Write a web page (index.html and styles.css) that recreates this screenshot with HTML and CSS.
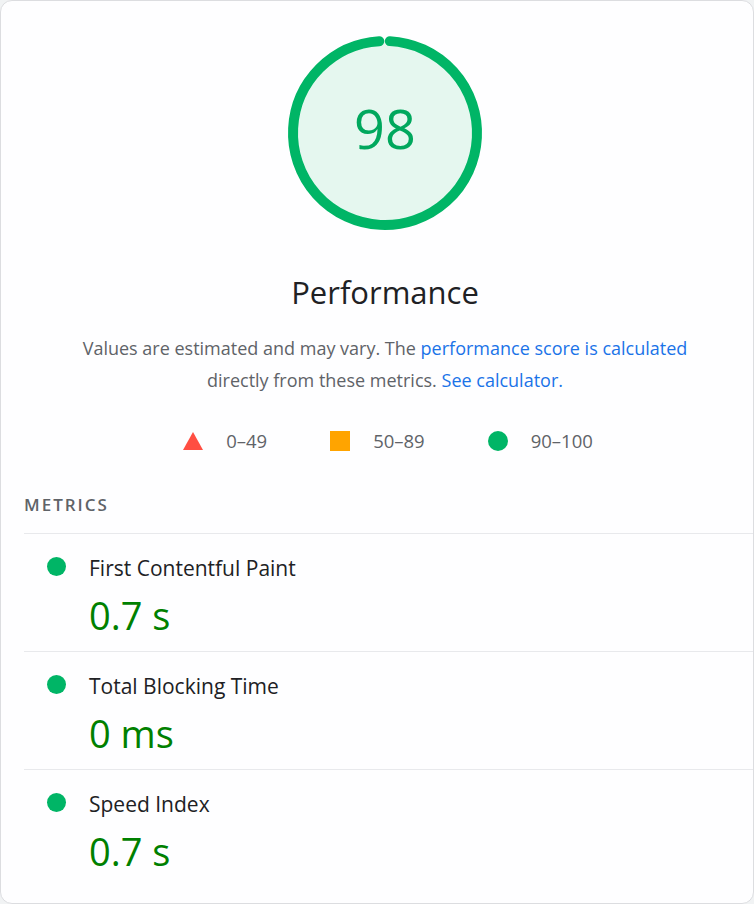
FILE: index.html
```html
<!DOCTYPE html>
<html>
<head>
	<meta charset="utf-8">
	<title>Performance</title>
	<link rel="stylesheet" href="styles.css">
</head>
<body>
	<div class="card">
		<div class="summary">
			<div class="gauge">
				<svg width="200" height="200" viewBox="0 0 200 200">
					<circle cx="100" cy="100" r="92" class="gaugeBase"></circle>
					<circle cx="100" cy="100" r="92" class="gaugeArc" transform="rotate(-87 100 100)"></circle>
				</svg>
				<span class="gaugeScore">98</span>
			</div>

			<div class="title">Performance</div>

			<p class="desc">
				Values are estimated and may vary. The <a href="#">performance score is calculated</a><br>
				directly from these metrics. <a href="#">See calculator.</a>
			</p>

			<div class="legend">
				<span class="legendItem"><span class="iconFail"></span>0–49</span>
				<span class="legendItem"><span class="iconAvg"></span>50–89</span>
				<span class="legendItem"><span class="iconPass"></span>90–100</span>
			</div>
		</div>

		<div class="metricsHead">Metrics</div>

		<div class="metric">
			<div class="metricTitle"><span class="dot"></span>First Contentful Paint</div>
			<div class="metricValue">0.7 s</div>
		</div>
		<div class="metric">
			<div class="metricTitle"><span class="dot"></span>Total Blocking Time</div>
			<div class="metricValue">0 ms</div>
		</div>
		<div class="metric">
			<div class="metricTitle"><span class="dot"></span>Speed Index</div>
			<div class="metricValue">0.7 s</div>
		</div>
	</div>
</body>
</html>
```

FILE: styles.css
```css
html, body {
	margin: 0;
	padding: 0;
	background: #f1f3f4;
}
body {
	font-family: 'Open Sans', 'Noto Sans', sans-serif;
	color: #202124;
}
.card {
	box-sizing: border-box;
	width: 754px;
	height: 904px;
	background: #fefeff;
	border: 1px solid #dcdde0;
	border-radius: 12px;
	padding: 32px 0 0 0;
	overflow: hidden;
}
.summary {
	padding-left: 16px;
}
.gauge {
	position: relative;
	width: 200px;
	height: 200px;
	margin: 0 auto;
}
.gauge svg {
	display: block;
}
.gaugeBase {
	fill: #e5f7ef;
	stroke: none;
}
.gaugeArc {
	fill: none;
	stroke: #00b566;
	stroke-width: 10;
	stroke-linecap: round;
	stroke-dasharray: 566.5 578.05;
}
.gaugeScore {
	position: absolute;
	left: 0;
	right: 0;
	top: 58px;
	text-align: center;
	font-size: 54px;
	line-height: 74px;
	color: #00a85d;
}
.title {
	text-align: center;
	font-size: 31px;
	line-height: 40px;
	margin: 39px 0 0 0;
	color: #202124;
}
.desc {
	text-align: center;
	font-size: 18px;
	line-height: 32px;
	margin: 20px 0 0 0;
	color: #5f6368;
}
.desc a {
	color: #1a73e8;
	text-decoration: none;
}
.legend {
	display: flex;
	justify-content: center;
	gap: 63px;
	margin: 31px 0 0 6px;
	font-size: 18.5px;
	line-height: 28px;
	color: #5f6368;
}
.legendItem {
	display: flex;
	align-items: center;
	gap: 23px;
}
.iconFail {
	width: 0;
	height: 0;
	border-left: 10px solid transparent;
	border-right: 10px solid transparent;
	border-bottom: 18px solid #ff4e42;
}
.iconAvg {
	width: 20px;
	height: 20px;
	background: #ffa400;
}
.iconPass {
	width: 20px;
	height: 20px;
	border-radius: 50%;
	background: #00b566;
}
.metricsHead {
	text-transform: uppercase;
	letter-spacing: 2px;
	font-size: 17px;
	font-weight: 600;
	color: #5f6368;
	margin: 38px 0 0 23px;
	line-height: 24px;
	padding-bottom: 16px;
	border-bottom: 1px solid #e8e9ec;
}
.metric {
	margin-left: 23px;
	height: 118px;
	border-bottom: 1px solid #e8e9ec;
	box-sizing: border-box;
	padding: 19px 0 0 23px;
}
.metric:last-child {
	border-bottom: none;
}
.metricTitle {
	display: flex;
	align-items: center;
	font-size: 21px;
	line-height: 30px;
	color: #202124;
}
.dot {
	width: 19px;
	height: 19px;
	border-radius: 50%;
	background: #00b566;
	margin: -3px 23px 0 0;
}
.metricValue {
	font-size: 38px;
	line-height: 50px;
	color: #008000;
	margin: 7px 0 0 42px;
}
```
